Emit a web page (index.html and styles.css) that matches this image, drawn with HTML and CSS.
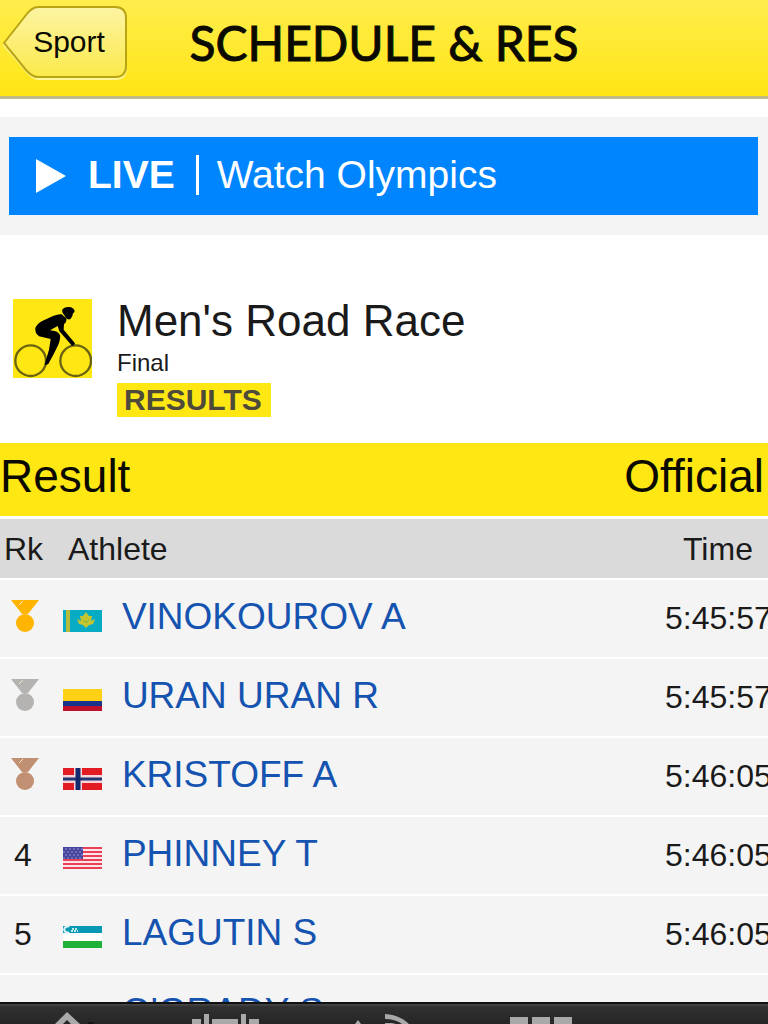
FILE: index.html
```
<!DOCTYPE html>
<html lang="en">
<head>
    <meta charset="UTF-8">
    <meta name="viewport" content="width=device-width, initial-scale=1.0">
    <title>Schedule &amp; Results</title>
    <link rel="stylesheet" href="styles.css">
</head>
<body>
    <header class="top-bar">
        <button class="back-button" type="button">
            <svg class="back-shape" viewBox="0 0 124 76" aria-hidden="true">
                <defs>
                    <linearGradient id="back-fill" x1="0" y1="0" x2="0" y2="1">
                        <stop offset="0" stop-color="#fdf4a4"/>
                        <stop offset="1" stop-color="#fbe94a"/>
                    </linearGradient>
                </defs>
                <path d="M1 39 L25 11 Q31 4 37 4 H112 Q123 4 123 15 V62 Q123 73 112 73 H37 Q30 73 24 66 Z" fill="none" stroke="#fff79a" stroke-width="2"/>
                <path d="M1 37 L23 9 Q29 1 35 1 H112 Q123 1 123 12 V60 Q123 71 112 71 H35 Q29 71 23 64 Z" fill="url(#back-fill)" stroke="#b9a416" stroke-width="2"/>
            </svg>
            <span class="back-label">Sport</span>
        </button>
        <h1 class="page-title">SCHEDULE &amp; RES</h1>
    </header>

    <main class="content">
        <div class="live-strip">
            <a class="live-link" href="#">
                <svg class="play-icon" viewBox="0 0 30 34" aria-hidden="true"><path d="M0 0 L30 17 L0 34 Z" fill="#fff"/></svg>
                <strong class="live-label">LIVE</strong>
                <span class="live-text">Watch Olympics</span>
            </a>
        </div>

        <section class="event">
            <svg class="event-icon" viewBox="40 43 237 237" aria-hidden="true">
                <rect x="40" y="43" width="237" height="237" fill="#ffe713"/>
                <g fill="none" stroke="#6b6310" stroke-width="7">
                    <circle cx="93" cy="228" r="46"/>
                    <circle cx="228" cy="228" r="46"/>
                </g>
                <path d="M187 76 Q194 66 208 67 Q222 68 225 79 Q224 84 220 86 Q219 97 213 102 Q207 107 200 101 L194 92 Q188 87 187 76 Z"/>
                <path d="M186 89 L200 101 Q202 112 193 119 L192 135 L226 176 Q224 184 217 183 L179 140 L174 124 L151 137 Q174 138 181 151 Q183 163 176 180 L161 210 L146 238 L137 242 Q134 238 138 229 L148 195 L153 163 L118 155 Q105 145 107 130 Q111 119 126 110 L160 94 Q175 88 186 89 Z"/>
            </svg>
            <div class="event-info">
                <h2 class="event-name">Men's Road Race</h2>
                <p class="event-phase">Final</p>
                <span class="event-status">RESULTS</span>
            </div>
        </section>

        <div class="result-bar">
            <span>Result</span>
            <span>Official</span>
        </div>

        <table class="results">
            <thead>
                <tr>
                    <th class="rank" scope="col">Rk</th>
                    <th class="athlete" scope="col">Athlete</th>
                    <th class="time" scope="col">Time</th>
                </tr>
            </thead>
            <tbody>
                <tr>
                    <td class="rank">
                        <svg class="medal gold" viewBox="0 0 28 32" role="img" aria-label="1"><path d="M0 0 H28 L17 14 H11 Z"/><circle cx="14" cy="23" r="9"/><path d="M8 5 L12 1" class="shine"/></svg>
                    </td>
                    <td class="athlete">
                        <svg class="flag" viewBox="0 0 39 22" aria-hidden="true">
                            <rect width="39" height="22" fill="#08abc4"/>
                            <path d="M5 0 V22" stroke="#b5ba3b" stroke-width="4"/>
                            <path d="M14 9 L18 11 L17 6 L20 6 L23 2 L26 6 L29 6 L28 11 L32 9 L30 14 L26 15 L23 18 L20 15 L16 14 Z" fill="#c5c52f"/>
                            <path d="M20 10 L22 12 H24 L26 10" fill="none" stroke="#7fb04a"/>
                        </svg>
                        <a href="#">VINOKOUROV A</a>
                    </td>
                    <td class="time">5:45:57</td>
                </tr>
                <tr>
                    <td class="rank">
                        <svg class="medal silver" viewBox="0 0 28 32" role="img" aria-label="2"><path d="M0 0 H28 L17 14 H11 Z"/><circle cx="14" cy="23" r="9"/><path d="M8 5 L12 1" class="shine"/></svg>
                    </td>
                    <td class="athlete">
                        <svg class="flag" viewBox="0 0 39 22" aria-hidden="true">
                            <rect width="39" height="13" fill="#ffd115"/>
                            <rect y="12" width="39" height="6" fill="#17338b"/>
                            <rect y="17" width="39" height="5" fill="#bd102c"/>
                        </svg>
                        <a href="#">URAN URAN R</a>
                    </td>
                    <td class="time">5:45:57</td>
                </tr>
                <tr>
                    <td class="rank">
                        <svg class="medal bronze" viewBox="0 0 28 32" role="img" aria-label="3"><path d="M0 0 H28 L17 14 H11 Z"/><circle cx="14" cy="23" r="9"/><path d="M8 5 L12 1" class="shine"/></svg>
                    </td>
                    <td class="athlete">
                        <svg class="flag" viewBox="0 0 39 22" aria-hidden="true">
                            <rect width="39" height="22" fill="#e31b23"/>
                            <path d="M0 11 H39 M15 0 V22" stroke="#f8d5da" stroke-width="8"/>
                            <path d="M0 11 H39" stroke="#223575" stroke-width="3"/>
                            <path d="M15 0 V22" stroke="#122a6d" stroke-width="5"/>
                        </svg>
                        <a href="#">KRISTOFF A</a>
                    </td>
                    <td class="time">5:46:05</td>
                </tr>
                <tr>
                    <td class="rank">4</td>
                    <td class="athlete">
                        <svg class="flag" viewBox="0 0 39 22" aria-hidden="true">
                            <rect width="39" height="22" fill="#fbe3e8"/>
                            <path d="M0 1 H39 M0 5 H39 M0 9 H39 M0 13 H39 M0 17 H39 M0 21 H39" stroke="#e84158" stroke-width="2"/>
                            <rect width="20" height="12" fill="#4545a0"/>
                            <path d="M2 2 H20 M0 5 H20 M2 8 H20 M0 11 H20" stroke="#9999d0" stroke-dasharray="2 2"/>
                        </svg>
                        <a href="#">PHINNEY T</a>
                    </td>
                    <td class="time">5:46:05</td>
                </tr>
                <tr>
                    <td class="rank">5</td>
                    <td class="athlete">
                        <svg class="flag" viewBox="0 0 39 22" aria-hidden="true">
                            <rect width="39" height="22" fill="#fff"/>
                            <rect width="39" height="7" fill="#0799b3"/>
                            <rect y="15" width="39" height="7" fill="#20b13b"/>
                            <path d="M6 1 A3 3 0 1 0 6 6" fill="none" stroke="#d9f3f6" stroke-width="2"/>
                            <path d="M8 5 H15 M9 3 H15" stroke="#bde8ee" stroke-width="2" stroke-dasharray="2 1"/>
                        </svg>
                        <a href="#">LAGUTIN S</a>
                    </td>
                    <td class="time">5:46:05</td>
                </tr>
                <tr>
                    <td class="rank">6</td>
                    <td class="athlete">
                        <svg class="flag" viewBox="0 0 39 22" aria-hidden="true">
                            <rect width="39" height="22" fill="#14287a"/>
                        </svg>
                        <a href="#">O'GRADY S</a>
                    </td>
                    <td class="time">5:46:05</td>
                </tr>
            </tbody>
        </table>
    </main>

    <nav class="tab-bar">
        <button type="button" aria-label="Home">
            <svg viewBox="0 0 72 12"><path d="M23 12 L35 0 L48 12 H39 L35 8 L31 12 Z"/><path d="M56 11 H62" stroke="#151515" stroke-width="2"/></svg>
        </button>
        <button type="button" aria-label="Venues">
            <svg viewBox="0 0 72 12"><path d="M2 7 H11 V12 H2 Z M14 2 H19 V12 H14 Z M22 7 H48 V12 H22 Z M51 2 H56 V12 H51 Z M59 7 H69 V12 H59 Z"/></svg>
        </button>
        <button type="button" aria-label="News">
            <svg viewBox="0 0 72 12"><path d="M7 12 L10 8 L13 12 Z M37 2 Q52 3 61 12 H54 Q47 7 37 7 Z"/><path d="M37 11 H44 L48 12 H37 Z"/></svg>
        </button>
        <button type="button" aria-label="More">
            <svg viewBox="0 0 72 12"><path d="M4 5 H22 V12 H4 Z M26 5 H44 V12 H26 Z M48 5 H66 V12 H48 Z"/></svg>
        </button>
    </nav>
</body>
</html>
```

FILE: styles.css
```
* {
    box-sizing: border-box;
}
body {
    margin: 0;
    height: 100vh;
    display: flex;
    flex-direction: column;
    overflow: hidden;
    font-family: "Liberation Sans", Arial, sans-serif;
    background: white;
    color: #1a1a1a;
}
a {
    text-decoration: none;
}

/* Top bar */
.top-bar {
    flex: none;
    display: grid;
    grid-template-columns: 1fr auto 1fr;
    align-items: start;
    height: 99px;
    padding: 6px 3px 0;
    background: linear-gradient(#ffed4d, #ffe514);
    border-bottom: 3px solid #bfba8a;
}
.back-button {
    position: relative;
    width: 124px;
    height: 76px;
    padding: 0 0 4px 8px;
    border: none;
    background: none;
    font-family: inherit;
    font-size: 30px;
    color: #0a0a00;
    cursor: pointer;
}
.back-shape {
    position: absolute;
    top: 0;
    left: 0;
    width: 124px;
    height: 76px;
}
.back-label {
    position: relative;
}
.page-title {
    margin: 0;
    font-family: Lato, "Gill Sans", sans-serif;
    font-size: 48px;
    font-weight: 400;
    line-height: 74px;
    white-space: nowrap;
    color: #0a0a00;
    -webkit-text-stroke: 1px #0a0a00;
}

/* Content */
.content {
    flex: 1;
    min-height: 0;
    padding-top: 18px;
    overflow: hidden;
}
.live-strip {
    padding: 20px 10px 20px 9px;
    background: #f4f4f4;
}
.live-link {
    display: flex;
    align-items: center;
    height: 78px;
    padding: 0 0 2px 27px;
    background: #0085ff;
    color: white;
    font-size: 39px;
}
.play-icon {
    width: 30px;
    height: 34px;
    margin: 2px 22px 0 0;
}
.live-text {
    margin-left: 21px;
    padding-left: 18px;
    border-left: 3px solid white;
    line-height: 40px;
}

.event {
    display: flex;
    gap: 25px;
    height: 208px;
    padding: 64px 13px 0;
}
.event-icon {
    flex: none;
    width: 79px;
    height: 79px;
}
.event-name {
    margin: 0;
    font-size: 44px;
    font-weight: 400;
    line-height: 44px;
}
.event-phase {
    margin: 4px 0;
    font-size: 24px;
    line-height: 32px;
}
.event-status {
    display: inline-block;
    padding: 0 9px 0 7px;
    background: #ffe713;
    color: #4d4a3c;
    font-size: 30px;
    font-weight: bold;
    line-height: 34px;
}

/* Results */
.result-bar {
    display: flex;
    justify-content: space-between;
    height: 76px;
    padding-right: 4px;
    background: #ffe713;
    border-bottom: 3px solid white;
    font-size: 46px;
    line-height: 66px;
    color: #0a0a00;
}
.results {
    width: 100%;
    table-layout: fixed;
    border-collapse: separate;
    border-spacing: 0;
    font-size: 32px;
    line-height: 44px;
}
.results th,
.results td {
    padding: 0;
    border-bottom: 2px solid white;
    text-align: left;
    vertical-align: baseline;
    white-space: nowrap;
}
.results th {
    height: 61px;
    padding-top: 8px;
    background: #dadada;
    font-weight: 400;
}
.results td {
    height: 79px;
    padding-top: 15px;
    background: #f4f4f4;
}
.results .rank {
    width: 63px;
}
.results th.rank {
    padding-left: 4px;
}
.results th.athlete {
    padding-left: 5px;
}
.results td.rank {
    padding-right: 17px;
    text-align: center;
}
.results .time {
    width: 103px;
}
.results th.time {
    padding-left: 18px;
}
.athlete a {
    margin-left: 11px;
    font-size: 37px;
    color: #1553b0;
}
.medal {
    width: 28px;
    height: 32px;
    margin-left: 3px;
    vertical-align: -3px;
}
.gold {
    fill: #ffb400;
}
.silver {
    fill: #b5b2b2;
}
.bronze {
    fill: #c18f72;
}
.shine {
    stroke: #f4e3c8;
    stroke-width: 1;
}
.flag {
    width: 39px;
    height: 22px;
    vertical-align: -3px;
}

/* Bottom tabs */
.tab-bar {
    flex: none;
    display: flex;
    gap: 86px;
    height: 22px;
    padding: 8px 32px 0;
    border-top: 2px solid #111;
    background: linear-gradient(#484848, #303030 3px, #262626);
}
.tab-bar button {
    width: 72px;
    height: 12px;
    padding: 0;
    border: none;
    background: none;
}
.tab-bar svg {
    display: block;
    width: 72px;
    height: 12px;
    fill: #a9a9a9;
}
```
